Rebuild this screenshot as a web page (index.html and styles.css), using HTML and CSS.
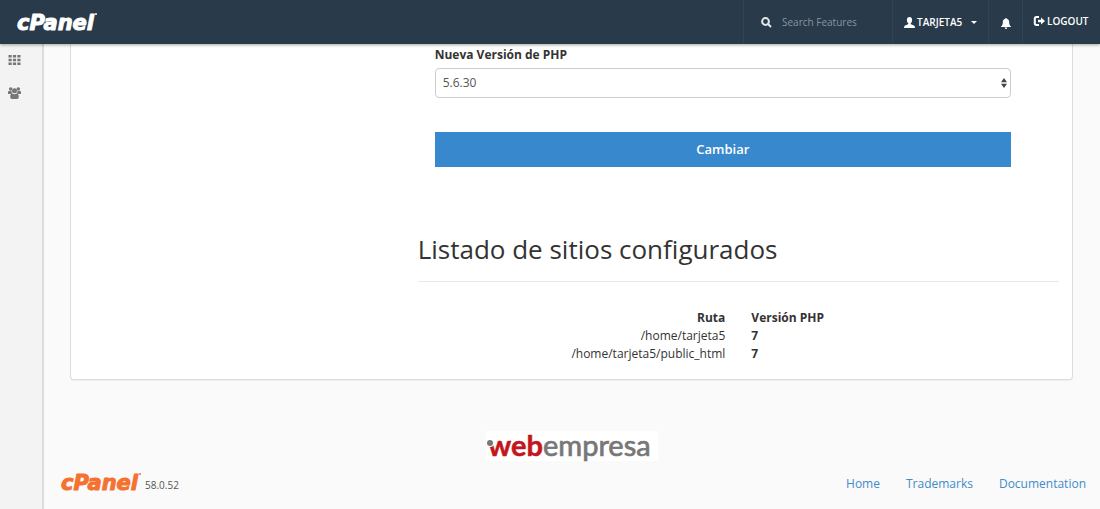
FILE: index.html
```html
<!DOCTYPE html>
<html lang="es">
<head>
<meta charset="utf-8">
<meta name="viewport" content="width=device-width, initial-scale=1">
<title>cPanel</title>
<link rel="stylesheet" href="styles.css">
</head>
<body>
<header class="topbar">
  <a class="brand" href="#" aria-label="cPanel">
    <svg class="brand-logo" viewBox="0 0 82 26"><text class="logo-text" x="1" y="20">cPanel</text><circle cx="80" cy="4" r="1"/></svg>
  </a>
  <div class="top-cell search">
    <svg class="icon-search" viewBox="0 0 11 11"><circle cx="4.5" cy="4.5" r="3.4"/><path d="M7 7l3 3"/></svg>
    <input class="search-input" type="text" placeholder="Search Features" aria-label="Search Features">
  </div>
  <button class="top-cell user" type="button">
    <svg class="icon-user" viewBox="0 0 11 11"><path d="M5.5 0C3.8 0 2.900 1.200 2.900 3c0 1.500.6 2.600 1.400 3.200v.9C3.800 7.900.8 8.200.3 9.300L0 11h11l-.3-1.700C10.200 8.200 7.200 7.900 6.700 7.100v-.9C7.500 5.600 8.100 4.500 8.100 3 8.100 1.200 7.200 0 5.500 0z"/></svg>
    <span>TARJETA5</span>
    <svg class="icon-caret" viewBox="0 0 6 3"><path d="M0 0h6L3 3z"/></svg>
  </button>
  <button class="top-cell bell" type="button" aria-label="Notifications">
    <svg class="icon-bell" viewBox="0 0 10 11"><path d="M5 0c.5 0 .8.300.8.800C7.500 1.200 8.200 2.600 8.200 4.200c0 2.600.8 3.600 1.800 4.400v.5H0v-.5c1-.8 1.800-1.800 1.800-4.400C1.800 2.600 2.500 1.200 4.200.8 4.200.3 4.500 0 5 0zM3.700 9.500h2.600C6.200 10.400 5.700 11 5 11s-1.200-.6-1.300-1.500z"/></svg>
  </button>
  <a class="top-cell logout" href="#">
    <svg class="icon-logout" viewBox="0 0 11 10"><path class="door" d="M5 1H2.500Q.8 1 .8 2.700v4.600Q.8 9 2.500 9H5"/><path d="M4 3.700h3V1.500L11 5 7 8.500V6.300H4z"/></svg>
    <span>LOGOUT</span>
  </a>
</header>
<div class="shell">
  <nav class="sidebar">
    <a class="side-link" href="#" aria-label="Home"><svg class="icon-grid" viewBox="0 0 12 10"><path d="M0 0h3.200v2.600H0zM4.400 0h3.200v2.600H4.400zM8.800 0H12v2.600H8.800zM0 3.700h3.200v2.600H0zM4.400 3.700h3.200v2.600H4.400zM8.800 3.700H12v2.600H8.800zM0 7.400h3.200V10H0zM4.400 7.400h3.200V10H4.400zM8.800 7.400H12V10H8.800z"/></svg></a>
    <a class="side-link" href="#" aria-label="Users"><svg class="icon-users" viewBox="0 0 13 12"><circle cx="2.700" cy="2" r="1.800"/><circle cx="10.300" cy="2" r="1.800"/><circle cx="6.500" cy="3.800" r="2.500"/><path d="M0 6.500V5Q0 3.800 1 3.900h2.500Q3.400 5.400 4.200 6.300L2.800 7H.8Q0 7 0 6.500zM13 6.500V5q0-1.200-1-1.100H9.500q.1 1.500-.7 2.400L10.200 7h2q.8 0 .8-.5zM2.200 10.200Q2.200 6.500 4.200 6.500q2.300 1.300 4.600 0 2 0 2 3.700 0 1.800-1.800 1.800H4q-1.800 0-1.800-1.800z"/></svg></a>
  </nav>
  <div class="content">
    <main class="card">
      <div class="column">
        <form class="php-form">
          <label class="field-label" for="version">Nueva Versión de PHP</label>
          <div class="select-wrap">
            <select class="select" id="version"><option>5.6.30</option></select>
            <svg class="icon-updown" viewBox="0 0 6 10"><path d="M3 0l3 4.200H0zM3 10l3-4.200H0z"/></svg>
          </div>
          <button class="submit" type="button">Cambiar</button>
        </form>
        <h2 class="title">Listado de sitios configurados</h2>
        <table class="sites">
          <thead><tr><th>Ruta</th><th>Versión PHP</th></tr></thead>
          <tbody>
            <tr><td>/home/tarjeta5</td><td>7</td></tr>
            <tr><td>/home/tarjeta5/public_html</td><td>7</td></tr>
          </tbody>
        </table>
      </div>
    </main>
    <footer class="footer">
      <div class="host">
        <svg class="host-logo" viewBox="0 0 172 30"><text class="host-text" x="2" y="25"><tspan class="host-web">web</tspan><tspan class="host-rest">empresa</tspan></text><circle class="host-gap" cx="4" cy="12" r="4"/><circle class="host-dot" cx="4" cy="12" r="3"/></svg>
      </div>
      <div class="footer-row">
        <a class="footer-brand" href="#" aria-label="cPanel"><svg class="brand-logo" viewBox="0 0 82 26"><text class="logo-text" x="1" y="19">cPanel</text><circle cx="80" cy="3" r="1"/></svg></a>
        <span class="version">58.0.52</span>
        <nav class="links"><a href="#">Home</a><a href="#">Trademarks</a><a href="#">Documentation</a></nav>
      </div>
    </footer>
  </div>
</div>
</body>
</html>
```
FILE: styles.css
```css
* { box-sizing: border-box; }
body {
  margin: 0;
  min-height: 100vh;
  display: flex;
  flex-direction: column;
  background: #fafafa;
  color: #333;
  font: 12px/18px "Open Sans", sans-serif;
}
button, input, select { font: inherit; color: inherit; }
a { text-decoration: none; }
svg { display: block; flex: none; overflow: visible; }

.topbar {
  position: relative;
  display: flex;
  height: 44px;
  background: #293a4a;
  color: #fff;
  box-shadow: 0 1px 3px rgba(0, 0, 0, .35);
}
.brand { margin-right: auto; padding: 10px 0 0 16px; color: #fff; }
.brand-logo { width: 82px; height: 26px; fill: currentColor; }
.logo-text { font: italic 700 21px "DejaVu Sans", sans-serif; stroke: currentColor; stroke-width: 1; stroke-linejoin: round; }
.top-cell {
  display: flex;
  align-items: center;
  border: 0;
  border-left: 1px solid #314454;
  background: none;
  color: #fff;
  font-size: 10px;
  font-weight: 600;
}
.search { width: 149px; padding-left: 17px; gap: 10px; }
.search-input {
  width: 100px;
  padding: 0;
  border: 0;
  background: none;
  font-size: 10px;
  font-weight: 400;
}
.search-input::placeholder { color: #8795a1; opacity: 1; }
.icon-search { width: 11px; height: 11px; fill: none; stroke: #e4e8eb; stroke-width: 2; }
.user { width: 96px; padding: 0 0 0 11px; gap: 2px; }
.icon-user { width: 11px; height: 11px; fill: #fff; }
.icon-caret { width: 6px; height: 3px; margin-left: 7px; fill: #fff; }
.bell { width: 34px; padding: 2px 0 0; justify-content: center; }
.icon-bell { width: 10px; height: 11px; fill: #fff; }
.logout { width: 78px; padding: 0 0 2px 11px; gap: 2px; }
.icon-logout { width: 11px; height: 10px; fill: #fff; }
.door { fill: none; stroke: #fff; stroke-width: 2; }

.shell { flex: 1; display: flex; }
.sidebar {
  display: flex;
  flex-direction: column;
  gap: 22px;
  width: 44px;
  padding: 11px 0 0 8px;
  border-right: 2px solid #dcdcdc;
  background: #f3f3f3;
}
.icon-grid { width: 13px; height: 10px; fill: #777; }
.icon-users { width: 13px; height: 12px; fill: #777; }

.content { flex: 1; min-width: 0; }
.card {
  margin: 0 27px 0 26px;
  border: 1px solid #ddd;
  border-top: 0;
  border-radius: 0 0 4px 4px;
  background: #fff;
  box-shadow: 0 1px 1px rgba(0, 0, 0, .05);
}
.column { margin-left: 33.333%; padding: 2px 13px 16px; }
.php-form { padding: 0 48px 0 17px; }
.field-label { display: block; font-weight: 700; }
.select-wrap { position: relative; margin: 4px 0 34px; }
.select {
  display: block;
  width: 100%;
  height: 30px;
  padding: 0 7px;
  appearance: none;
  border: 1px solid #ccc;
  border-radius: 4px;
  background: #fff;
  color: #555;
}
.icon-updown { position: absolute; right: 4px; top: 10px; width: 6px; height: 10px; fill: #444; }
.submit {
  display: block;
  width: 100%;
  height: 35px;
  padding: 0 0 2px;
  border: 0;
  background: #3888cd;
  color: #fff;
  font-size: 13px;
  font-weight: 600;
}
.title {
  margin: 65px 0 27px;
  padding-bottom: 15px;
  border-bottom: 1px solid #e8e8e8;
  font-size: 26px;
  line-height: 34px;
  font-weight: 400;
}
.sites { width: 100%; table-layout: fixed; border-collapse: collapse; }
.sites th, .sites td { padding: 0 13px; text-align: right; }
.sites th:last-child, .sites td:last-child { text-align: left; font-weight: 700; }

.footer { padding: 51px 14px 12px 16px; }
.host { display: flex; justify-content: center; margin-right: 3px; }
.host-logo { width: 172px; height: 30px; background: #fff; }
.host-text { font: 29px Lato, sans-serif; }
.host-web { fill: #c3161c; font-weight: 700; stroke: #c3161c; stroke-width: .5; }
.host-rest { fill: #777; stroke: #777; stroke-width: .7; }
.host-dot { fill: #777; }
.host-gap { fill: #fff; }
.footer-row { display: flex; align-items: center; margin-top: 10px; }
.footer-brand { color: #f47130; }
.version { margin-left: 3px; color: #555; font-size: 10px; padding-top: 2px; }
.links { display: flex; gap: 26px; margin-left: auto; }
.links a { color: #428bca; }
```
